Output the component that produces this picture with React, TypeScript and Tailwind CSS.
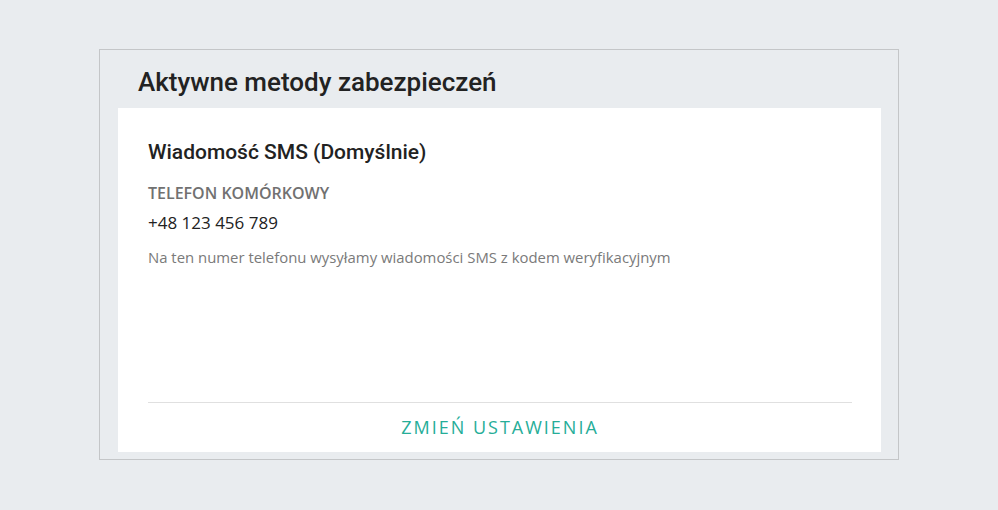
export default function App() {
  return (
    <div className="min-h-screen w-full bg-[#e9ecef] pt-[49px]">
      <div className="mx-auto flex h-[411px] w-[800px] flex-col border border-[#c4c6c8] bg-[#e9ecef] pb-[7px] pl-[18px] pr-[17px]">
        <h1 className="flex h-[58px] items-center pl-[20px] pt-[6px] font-['Roboto',sans-serif] text-[26px] font-medium text-[#222]">
          Aktywne metody zabezpieczeń
        </h1>
        <div className="flex flex-1 flex-col bg-white pl-[30px] pr-[29px]">
          <h2 className="mt-[32px] font-['Roboto',sans-serif] text-[21px] font-medium leading-[24px] text-[#222]">
            Wiadomość SMS (Domyślnie)
          </h2>
          <div className="mt-[19px] font-['Open_Sans',sans-serif] text-[16px] font-semibold leading-[20px] text-[#717171]">
            TELEFON KOMÓRKOWY
          </div>
          <div className="mt-[9px] font-['Open_Sans',sans-serif] text-[17px] leading-[22px] text-[#222]">
            +48 123 456 789
          </div>
          <p className="mt-[14px] font-['Open_Sans',sans-serif] text-[14.9px] leading-[18px] text-[#7a7a7a]">
            Na ten numer telefonu wysyłamy wiadomości SMS z kodem weryfikacyjnym
          </p>
          <div className="mt-auto border-t border-[#e0e0e0]">
            <button className="flex h-[49px] w-full items-center justify-center pb-[1px] font-['Open_Sans',sans-serif] text-[18px] tracking-[2px] text-[#26ad98]">
              ZMIEŃ USTAWIENIA
            </button>
          </div>
        </div>
      </div>
    </div>
  );
}
